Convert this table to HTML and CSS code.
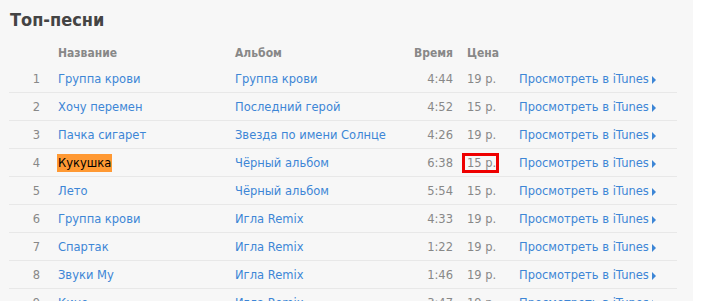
FILE: index.html
```html
<!DOCTYPE html>
<html lang="ru">
<head>
<meta charset="utf-8">
<title>Топ-песни</title>
<link rel="stylesheet" href="styles.css">
</head>
<body>
<div class="panel">
  <h1 class="title">Топ-песни</h1>
  <table class="songs">
    <colgroup>
      <col class="c-num"><col class="c-name"><col class="c-album"><col class="c-time"><col class="c-price"><col class="c-link">
    </colgroup>
    <thead>
      <tr><th></th><th class="name">Название</th><th>Альбом</th><th class="time">Время</th><th class="price">Цена</th><th></th></tr>
    </thead>
    <tbody>
      <tr><td class="num">1</td><td class="name"><a>Группа крови</a></td><td><a>Группа крови</a></td><td class="time">4:44</td><td class="price">19 р.</td><td><a>Просмотреть в iTunes<span class="tri"></span></a></td></tr>
      <tr><td class="num">2</td><td class="name"><a>Хочу перемен</a></td><td><a>Последний герой</a></td><td class="time">4:52</td><td class="price">15 р.</td><td><a>Просмотреть в iTunes<span class="tri"></span></a></td></tr>
      <tr><td class="num">3</td><td class="name"><a>Пачка сигарет</a></td><td><a>Звезда по имени Солнце</a></td><td class="time">4:26</td><td class="price">19 р.</td><td><a>Просмотреть в iTunes<span class="tri"></span></a></td></tr>
      <tr><td class="num">4</td><td class="name"><span class="hl">Кукушка</span></td><td><a>Чёрный альбом</a></td><td class="time">6:38</td><td class="price"><span class="boxed">15 р.</span></td><td><a>Просмотреть в iTunes<span class="tri"></span></a></td></tr>
      <tr><td class="num">5</td><td class="name"><a>Лето</a></td><td><a>Чёрный альбом</a></td><td class="time">5:54</td><td class="price">15 р.</td><td><a>Просмотреть в iTunes<span class="tri"></span></a></td></tr>
      <tr><td class="num">6</td><td class="name"><a>Группа крови</a></td><td><a>Игла Remix</a></td><td class="time">4:33</td><td class="price">19 р.</td><td><a>Просмотреть в iTunes<span class="tri"></span></a></td></tr>
      <tr><td class="num">7</td><td class="name"><a>Спартак</a></td><td><a>Игла Remix</a></td><td class="time">1:22</td><td class="price">19 р.</td><td><a>Просмотреть в iTunes<span class="tri"></span></a></td></tr>
      <tr><td class="num">8</td><td class="name"><a>Звуки Му</a></td><td><a>Игла Remix</a></td><td class="time">1:46</td><td class="price">19 р.</td><td><a>Просмотреть в iTunes<span class="tri"></span></a></td></tr>
      <tr><td class="num">9</td><td class="name"><a>Кино</a></td><td><a>Игла Remix</a></td><td class="time">3:47</td><td class="price">19 р.</td><td><a>Просмотреть в iTunes<span class="tri"></span></a></td></tr>
    </tbody>
  </table>
</div>
</body>
</html>
```
FILE: styles.css
```css
html, body {
  margin: 0;
  padding: 0;
  background: #ffffff;
  overflow: hidden;
}
body {
  font-family: "DejaVu Sans", Verdana, sans-serif;
  font-size: 11.5px;
  color: #888888;
}
.panel {
  width: 693px;
  height: 301px;
  background: #f7f7f7;
  padding: 9px 0 0 9px;
  box-sizing: border-box;
  overflow: hidden;
}
.title {
  margin: 0 0 0 1px;
  font-family: "DejaVu Sans Condensed", "DejaVu Sans", sans-serif;
  font-size: 18px;
  line-height: 22px;
  font-weight: bold;
  color: #444444;
}
.songs {
  margin-top: 10px;
  border-collapse: collapse;
  table-layout: fixed;
  width: 668px;
}
.c-num { width: 31px; }
.c-name { width: 195px; }
.c-album { width: 175px; }
.c-time { width: 43px; }
.c-price { width: 66px; }
.c-link { width: 158px; }
.songs th {
  text-align: left;
  font-family: "DejaVu Sans Condensed", "DejaVu Sans", sans-serif;
  font-size: 12px;
  font-weight: bold;
  color: #888888;
  height: 24px;
  padding: 0;
  vertical-align: middle;
}
.songs td {
  height: 27px;
  padding: 0;
  border-bottom: 1px solid #e8e8e8;
  vertical-align: middle;
  white-space: nowrap;
}
.songs .num { text-align: right; color: #888888; }
.songs .name { padding-left: 18px; }
.songs .time { text-align: right; }
.songs .price { padding-left: 14px; }
.songs a {
  color: #3d86d6;
  text-decoration: none;
}
.tri {
  display: inline-block;
  width: 0;
  height: 0;
  margin-left: 3px;
  border-top: 4px solid transparent;
  border-bottom: 4px solid transparent;
  border-left: 4px solid #3d86d6;
  vertical-align: -1px;
}
.hl {
  background: #ff9933;
  color: #000000;
  padding: 2px 1px 2px 1px;
  margin-left: -1px;
}
.boxed {
  position: relative;
}
.boxed::after {
  content: "";
  position: absolute;
  left: -5px;
  right: -3px;
  top: -3px;
  bottom: -3px;
  border: 3px solid #ee0000;
}
```
